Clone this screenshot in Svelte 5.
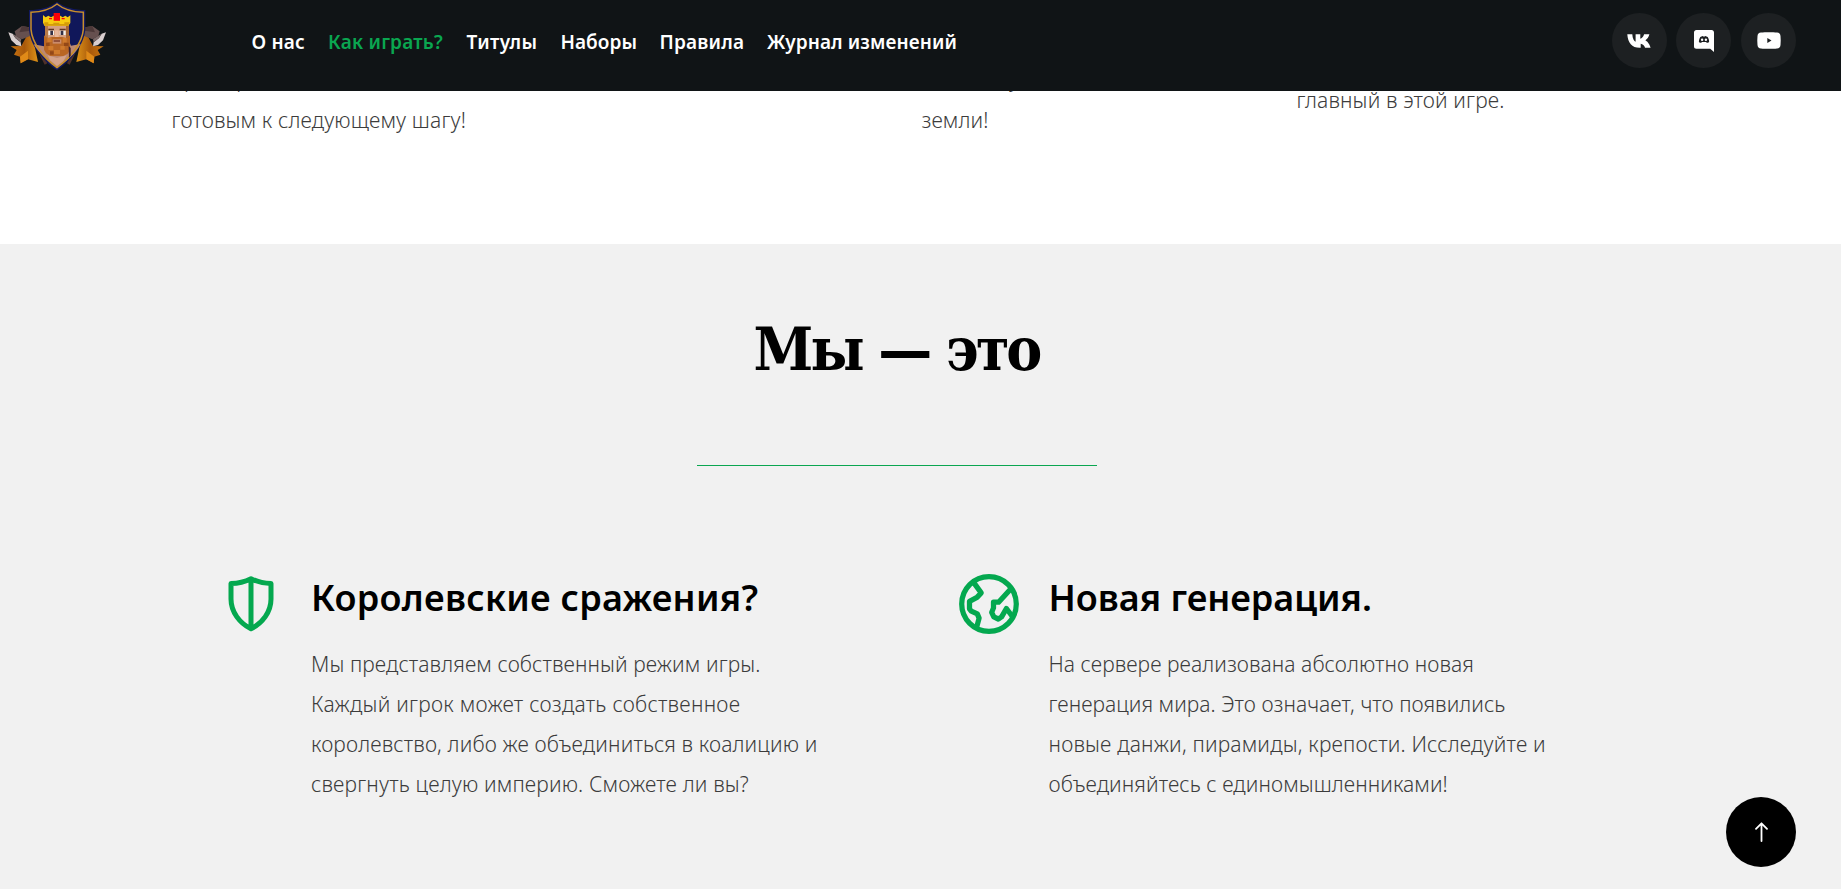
<script>
  const nav = [
    { label: 'О нас', ls: 0.18 },
    { label: 'Как играть?', ls: 0.23, active: true },
    { label: 'Титулы', ls: 0.4 },
    { label: 'Наборы', ls: 0.07 },
    { label: 'Правила', ls: 0.2 },
    { label: 'Журнал изменений', ls: 0.1 }
  ];

  const steps = [
    { lines: ['пример', 'готовым к следующему шагу!'] },
    { lines: [] },
    { lines: ['за победу', 'земли!'] },
    { lines: ['главный в этой игре.'], low: true }
  ];

  const features = [
    {
      icon: 'shield',
      title: 'Королевские сражения?',
      ls: 0.27,
      lines: [
        ['Мы представляем собственный режим игры.', 0.1],
        ['Каждый игрок может создать собственное', 0.26],
        ['королевство, либо же объединиться в коалицию и', 0.14],
        ['свергнуть целую империю. Сможете ли вы?', 0.17]
      ]
    },
    {
      icon: 'globe',
      title: 'Новая генерация.',
      ls: -0.02,
      lines: [
        ['На сервере реализована абсолютно новая', 0.08],
        ['генерация мира. Это означает, что появились', 0.05],
        ['новые данжи, пирамиды, крепости. Исследуйте и', 0.18],
        ['объединяйтесь с единомышленниками!', 0.08]
      ]
    }
  ];
</script>

<header>
  <a class="logo" href="#top" aria-label="logo">
    <svg viewBox="0 0 360 273" width="120" height="91">
      <defs>
        <linearGradient id="wing" x1="0" x2="1"><stop offset="0" stop-color="#c97410" /><stop offset=".5" stop-color="#a9590b" /><stop offset="1" stop-color="#dc9218" /></linearGradient>
      </defs>
      {#each [false, true] as flip}
        <g transform={flip ? 'translate(343 0) scale(-1 1)' : ''}>
          <path d="M32 139 L50 150 L42 164 L60 170 L62 190 L84 178 L114 186 L96 100 L82 104 L64 138Z" fill="url(#wing)" />
          <path d="M60 170 L84 152 L84 178 L62 190Z" fill="#e08a18" />
          <path d="M92 108 L104 108 L142 190 L134 194Z" fill="#50312a" />
          <path d="M44 94 L66 78 L88 82 L96 106 L66 118 L48 108Z" fill="#66504f" />
          <path d="M66 78 L86 82 L90 92 L58 97Z" fill="#4c3838" />
          <path d="M25 97 L38 101 L46 114 L62 127 L64 139 L49 135 L34 121Z" fill="#d9cfcf" />
          <path d="M38 101 L46 114 L62 127 L64 117Z" fill="#7d6a69" />
        </g>
      {/each}
      <path d="M171 5 C150 23 118 29 87 30 V88 C89 132 125 180 171 211 C217 180 253 132 256 88 V30 C225 29 193 23 171 5Z" fill="#11195f" />
      <path id="crest" d="M171 12 C148 31 120 36 93 37 V88 C96 128 130 173 171 203 C212 173 247 128 250 88 V37 C222 36 194 31 171 12Z" fill="#10175a" />
      <path d="M101 133 L132 139 L137 122 H207 L213 137 L242 132 C227 161 201 182 171 203 C141 182 115 157 101 133Z" fill="#bc8973" />
      <path d="M143 166 L171 174 L200 166 L190 184 L171 198 L150 181Z" fill="#d4a28a" />
      <path d="M171 12 C148 31 120 36 93 37 V88 C96 128 130 173 171 203 C212 173 247 128 250 88 V37 C222 36 194 31 171 12Z" fill="none" stroke="#c98f2c" stroke-width="4.5" />
      <rect x="135" y="72" width="72" height="62" fill="#d6a080" />
      <rect x="135" y="72" width="9" height="48" fill="#b97946" />
      <rect x="198" y="72" width="9" height="50" fill="#a56636" />
      <path d="M145 86 H162 V91 H145Z M179 86 H197 V91 H179Z" fill="#5f341e" />
      <path d="M145 92 H162 V105 H145Z M179 92 H197 V105 H179Z" fill="#f3eee8" />
      <path d="M151 92 H159 V105 H151Z M182 92 H190 V105 H182Z" fill="#353044" />
      <rect x="165" y="91" width="11" height="21" fill="#e7b79b" />
      <path d="M132 106 L142 114 L157 111 H186 L200 114 L210 106 V149 L203 161 L190 168 H151 L138 160 L132 149Z" fill="#b96624" />
      <path d="M142 114 H155 V126 H142Z M188 114 H200 V128 H188Z M145 138 H160 V150 H145Z M181 138 H194 V149 H181Z M162 150 H180 V162 H162Z" fill="#d07b2d" />
      <path d="M138 128 H149 V138 H138Z M192 128 H206 V138 H192Z M150 154 H161 V164 H150Z" fill="#944817" />
      <rect x="158" y="118" width="26" height="13" fill="#ca8b6b" />
      <rect x="161" y="121" width="19" height="4" fill="#783525" />
      <path d="M206 138 L212 144 V167 L207 174Z" fill="#3b2230" />
      <path d="M129 45 L137 52 L145 47 L153 52 L161 47 H181 L188 52 L196 47 L203 52 L211 46 V69 L205 77 H133 L129 68Z" fill="#f7cb10" />
      <path d="M133 67 H145 V72 H160 V68 H178 V72 H193 V67 H209 L205 77 H133Z" fill="#d59b08" />
      <path d="M161 39 H180 V62 H161Z M147 54 H156 V58 H147Z M185 54 H194 V58 H185Z" fill="#fb0008" />
    </svg>
  </a>
  <nav>
    {#each nav as item}
      <a href="#top" class:active={item.active} style="letter-spacing:{item.ls}px">{item.label}</a>
    {/each}
  </nav>
  <div class="social">
    <a href="#vk" aria-label="VK">
      <svg class="vk" viewBox="0 0 24 14" width="24" height="14"><path fill="#fff" d="M12.6 13.800C5 13.800.8 8.500.3.2h5c.2 4.600 1.900 7 3.300 7.600V.2h4.700v4.600c1.500-.3 3.100-2.300 3.800-4.600h5.300c-.6 3-2.500 5-4 6 1.500.9 4 3 5.200 7.600h-5.500c-.7-2.200-2.400-3.700-4.400-4v4Z" /></svg>
    </a>
    <a href="#discord" aria-label="Discord">
      <svg viewBox="0 0 20 22" width="20" height="22"><path fill="#fff" d="M2.400 0h15.200C19 0 20 1 20 2.400V22l-3.800-3.300H2.400C1 18.700 0 17.700 0 16.400v-14C0 1 1 0 2.400 0Z" /><path fill="#1d2022" d="M6.300 6.900 8.700 6l.5.500h1.600l.5-.5 2.400.9c1 1.500 1.500 3.200 1.400 5-1 .7-1.800.9-2.400.9l-.6-.8H7.900l-.6.8c-.6 0-1.500-.2-2.400-.9 0-1.800.4-3.500 1.400-5Z" /><circle cx="8.100" cy="9.800" r="1.200" fill="#fff" /><circle cx="11.900" cy="9.800" r="1.200" fill="#fff" /></svg>
    </a>
    <a href="#youtube" aria-label="YouTube">
      <svg viewBox="0 0 24 17" width="24" height="17"><path fill="#fff" d="M4 .5C8 .1 16 .1 20 .5c2.200.2 3.300 1.400 3.500 3.500.3 3 .3 6 0 9-.2 2.100-1.300 3.300-3.500 3.500-4 .4-12 .4-16 0C1.800 16.300.7 15.100.5 13c-.3-3-.3-6 0-9C.7 1.900 1.800.7 4 .5Z" /><path fill="#1d2022" d="m10.300 6 4.200 2.500-4.200 2.500Z" /></svg>
    </a>
  </div>
</header>

<main id="top">
  <section class="steps">
    {#each steps as step}
      <div class="step" class:low={step.low}>
        {#each step.lines as line}<p>{line}</p>{/each}
      </div>
    {/each}
  </section>

  <section class="about">
    <h2>Мы — это</h2>
    <hr />
    <div class="features">
      {#each features as f}
        <article>
          {#if f.icon === 'shield'}
            <svg class="icon" viewBox="0 0 72 72"><path d="M36 10.700C30 13.700 23 15.400 16 15.600V31C16 44 24.500 55 36 60.800 47.500 55 56 44 56 31V15.600C49 15.400 42 13.700 36 10.700ZM36 11V60" stroke-width="5" /></svg>
          {:else}
            <svg class="icon" viewBox="0 0 24 24"><circle cx="12" cy="12" r="9.100" stroke-width="1.750" /><path d="M6.800 4.700 9.400 8.300 8 9.800 5.500 11.100V13.600L6.100 14.400 8.100 15.300 8.700 16.700 7.900 19.700M19.300 6.900 15.200 11.400H13.500V13.300L12.900 14.800 13.600 16.300 15.100 17 16.200 16.300 17.800 13.500 19.600 15.900" stroke-width="1.750" /></svg>
          {/if}
          <div class="copy">
            <h3 style="letter-spacing:{f.ls}px">{f.title}</h3>
            {#each f.lines as [text, ls]}<p style="letter-spacing:{ls}px">{text}</p>{/each}
          </div>
        </article>
      {/each}
    </div>
  </section>
</main>

<a class="up" href="#top" aria-label="up">
  <svg viewBox="0 0 14 20" width="14" height="20"><path d="M7.500 19V1.500M2 6.800 7.500 1.300l5.500 5.500" fill="none" stroke="#fff" stroke-width="1.800" stroke-linecap="round" stroke-linejoin="round" /></svg>
</a>

<style>
  :global(body) {
    font-family: 'Noto Sans', 'Open Sans', sans-serif;
    background: #f1f1f1;
    overflow: hidden;
  }
  a { text-decoration: none; color: #fff; }
  h2, h3, p { margin: 0; }
  header {
    position: fixed;
    inset: 0 0 auto 0;
    z-index: 2;
    height: 91px;
    display: flex;
    background: #101416;
  }
  .logo { width: 120px; margin-right: 131.500px; }
  .logo svg { display: block; }
  nav {
    display: grid;
    grid-template-columns: 76.500px 138.500px 94px 99px 107.500px auto;
    padding-top: 29px;
    font-size: 19px;
    font-weight: 600;
    line-height: 26px;
    white-space: nowrap;
  }
  nav a.active { color: #0aa650; }
  .social {
    display: flex;
    margin: 13px 45px 0 auto;
  }
  .social a {
    width: 55px;
    height: 55px;
    border-radius: 50%;
    background: #1d2022;
    display: flex;
    align-items: center;
    justify-content: center;
  }
  .social a + a { margin-left: 9px; }
  .social a:last-child { margin-left: 10px; }
  .vk { margin-right: 1px; }
  .steps {
    box-sizing: border-box;
    height: 244px;
    padding: 60px 0 0 171.500px;
    display: grid;
    grid-template-columns: repeat(4, 375px);
    background: #fff;
  }
  p {
    font-size: 21px;
    font-weight: 300;
    line-height: 40px;
    color: #3c3c3c;
    letter-spacing: 0.14px;
    white-space: nowrap;
  }
  .step:not(.low) p:first-child { line-height: 38px; padding-bottom: 2px; }
  .low { padding-top: 20px; }
  .about {
    height: 645px;
    box-sizing: border-box;
    padding-top: 67px;
    width: 1794px;
  }
  h2 {
    font: bold 60px/76px 'DejaVu Serif Condensed', 'DejaVu Serif', serif;
    letter-spacing: -3px;
    word-spacing: 1px;
    text-align: center;
    color: #000;
    padding-right: 1px;
  }
  hr {
    width: 400px;
    height: 1px;
    border: 0;
    margin: 78px auto 102px;
    background: #0aa650;
  }
  .features {
    display: grid;
    grid-template-columns: repeat(2, 737.500px);
    padding-left: 215px;
  }
  article { display: flex; gap: 24px; }
  .icon {
    width: 72px;
    height: 72px;
    flex: none;
    fill: none;
    stroke: #04a84f;
    stroke-linecap: round;
    stroke-linejoin: round;
  }
  .copy { padding-top: 8px; }
  h3 {
    font-size: 36px;
    font-weight: 600;
    line-height: 44px;
    margin-bottom: 24px;
    color: #000;
    white-space: nowrap;
  }
  .up {
    position: fixed;
    right: 45px;
    bottom: 22px;
    width: 70px;
    height: 70px;
    border-radius: 50%;
    background: #000;
    display: flex;
    align-items: center;
    justify-content: center;
  }
</style>
